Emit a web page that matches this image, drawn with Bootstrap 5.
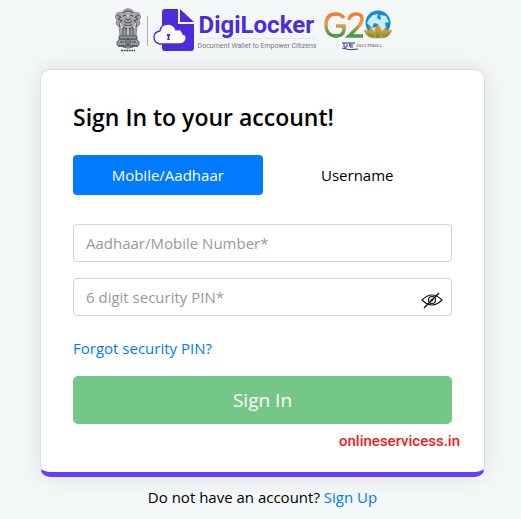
<!DOCTYPE html>
<html lang="en">
<head>
<meta charset="utf-8">
<meta name="viewport" content="width=device-width, initial-scale=1">
<title>DigiLocker - Sign In</title>
<link href="https://cdn.jsdelivr.net/npm/bootstrap@5.3.0/dist/css/bootstrap.min.css" rel="stylesheet">
<style>
body { background: #f4f7f8; color: #000; font-family: "Segoe UI", "Open Sans", "Noto Sans", sans-serif; font-size: 15px; line-height: 24px; }
.page { max-width: 540px; padding: 0 36px 0 40px; }
.brand-bar { height: 69px; padding: 8px 16px 16px 0; }
.brand-rule { width: 1px; height: 30px; background: #a9acb3; margin: 0 5px 0 6px; }
.brand-text { padding: 4px 0 0 2px; }
.brand-name { font: bold 24px/26px "Roboto", sans-serif; color: #4c2bdb; padding-left: 1px; }
.brand-tag { font: 7px/10px "Roboto", sans-serif; color: #77777e; border-top: 1px solid #e3e3f6; padding-top: 2px; }
.g20 { margin-left: 8px; }
.login-card { border: 1px solid #dcdfe2; border-bottom: 5px solid #673dff; border-radius: 10px; padding: 32px 32px 21px; box-shadow: 0 0 22px rgba(0, 0, 0, .09); }
.login-title { font-size: 23px; line-height: 30px; font-weight: 600; margin-bottom: 23px; }
.tab-btn { height: 40px; border: 0; border-radius: 4px; padding: 0; font-size: 15px; color: #000; }
.tab-btn.active, .tab-btn.active:hover { background: #007bff; color: #fff; }
.field, .field:focus { height: 38px; border: 1px solid #ced4da; border-radius: 4px; font-size: 15px; padding: 6px 12px; color: #495057; }
.field::placeholder { color: #999; }
.fields { margin-top: 29px; gap: 16px; }
.eye-btn { right: 9px; top: 12px; line-height: 0; color: #111; }
.page a { color: #007bff; text-decoration: none; }
.forgot { margin: 20px 0 16px; }
.submit-btn, .submit-btn:hover { height: 48px; border: 0; border-radius: 5px; background: #75c787; color: #fff; font-size: 19px; }
.site-mark { font: 500 15px/20px Roboto, sans-serif; color: #ed1c24; margin: 7px -8px 0 0; }
.signup { margin-top: 8px; }
</style>
<script src="https://cdn.jsdelivr.net/npm/bootstrap@5.3.0/dist/js/bootstrap.bundle.min.js"></script>
</head>
<body>
<main class="page mx-auto">
  <header class="brand-bar d-flex justify-content-center align-items-start">
    <svg width="26" height="44" viewBox="0 0 26 44" fill="none" stroke="#4a4a4c" aria-label="State Emblem of India" role="img">
      <path d="M9 2q4-3 8 0l2 2 5 1 2 4-2 3 1 4-3 3-1 9H5L4 19l-3-3 1-4-2-3 2-4 5-1z" fill="#a3a5a8" stroke="#777" stroke-width=".7"/>
      <path d="M8 5q5-4 10 0M8 8l3-1m4 0 3 1M10 11q3 2 6 0M2 7l4 2-3 2 4 2m17-6-4 2 3 2-4 2M7 12q-4 3-2 7m14-7q4 3 2 7M9 13q4 4 8 0M9 16q4 4 8 0M8 19q5 4 10 0M8 20v7m3-7v7m4-7v7m3-7v7"/>
      <path d="M5 15l2 5m14-5-2 5M13 6v3M13 18v9" stroke="#eee" stroke-width=".9"/>
      <path d="M4 28h18v3H4zM5 31h16q5 3 2 7H3q-3-4 2-7z" fill="#97999c" stroke-width=".8"/>
      <circle cx="13" cy="34" r="2.5" fill="#ddd"/><path d="M5 34h4m8 0h4M13 31v6m-2-3h4M6 38q7 4 14 0M3 38h20"/>
      <path d="M6 42.500h14" stroke-width="1.500" stroke-dasharray="2 .6"/>
    </svg>
    <span class="brand-rule mt-2"></span>
    <svg width="43" height="44" viewBox="0 0 43 44" aria-hidden="true">
      <path d="M12 1h13v15h16v24q0 3-3 3H12q-3 0-3-3V4q0-3 3-3z" fill="#4c2bdb"/>
      <path d="M27 1l14 13H27z" fill="#4c2bdb"/>
      <path d="M7 36q-6-1-6-7 0-5 6-6 1-7 8-7 6 0 8 6 5-2 7 4 4 1 3 5-1 5-6 5z" fill="#fff" stroke="#4c2bdb" stroke-width="1.300"/>
      <path d="M14 26h3v2l-1 1 1 3h-3l1-3-1-1z" fill="#4c2bdb"/>
    </svg>
    <div class="brand-text text-nowrap">
      <div class="brand-name">DigiLocker</div>
      <div class="brand-tag">Document Wallet to Empower Citizens</div>
    </div>
    <svg class="g20" width="70" height="44" viewBox="0 0 70 44" role="img" aria-label="G20 India">
      <defs>
        <linearGradient id="tri" gradientUnits="userSpaceOnUse" x1="0" y1="4" x2="0" y2="29"><stop offset=".1" stop-color="#f47b35"/><stop offset=".5" stop-color="#dba24d"/><stop offset=".9" stop-color="#4a9b45"/></linearGradient>
        <linearGradient id="petal" x1="0" y1="0" x2="0" y2="1"><stop stop-color="#f58b2c"/><stop offset=".5" stop-color="#c69b35"/><stop offset="1" stop-color="#3e9140"/></linearGradient>
      </defs>
      <path d="M20 10Q17 6 12 6C5 6 2 10 2 17s4 11 10 11q7 0 8-6v-4h-8" fill="none" stroke="url(#tri)" stroke-width="3.500"/>
      <path d="M25 12q1-6 7-6 6 0 6 5 0 4-4 8l-9 9h14" fill="none" stroke="url(#tri)" stroke-width="3.500"/>
      <circle cx="54" cy="15" r="12.500" fill="#168bd0"/>
      <path d="M45 11l4-4 5-1-1 4 3 2-2 4-4-1-2 5-3-3-2-2zM56 7l6 1 3 6-4 1 1 5-4 4-3-6-2-4 4-3zM47 20l5-1 2 5-4 3z" fill="#c9edfa"/>
      <path d="M54 17q6 6 3 13h-6q-3-7 3-13zM46 19q5 4 6 11-8-2-6-11zm16 0q-5 4-6 11 8-2 6-11zM40 22q9 0 12 8-9 1-12-8zm28 0q-9 0-12 8 9 1 12-8z" fill="url(#petal)" stroke="#e1a33a" stroke-width=".5"/>
      <path d="M18 35h13M20 35v4h3v-3m3-1v4h3m-4-2h4m-11 3q8 3 16 1" fill="none" stroke="#353684"/>
      <text x="32" y="39" font-family="Liberation Serif, serif" font-size="5" fill="#353684">2023 INDIA</text>
    </svg>
  </header>

  <form class="login-card bg-white">
    <h1 class="login-title">Sign In to your account!</h1>
    <div class="d-flex">
      <button type="button" class="btn tab-btn active w-50">Mobile/Aadhaar</button>
      <button type="button" class="btn tab-btn w-50">Username</button>
    </div>
    <div class="fields d-flex flex-column">
      <input class="form-control field" type="text" aria-label="Aadhaar/Mobile Number" placeholder="Aadhaar/Mobile Number*">
      <div class="position-relative">
        <input class="form-control field" type="password" aria-label="6 digit security PIN" placeholder="6 digit security PIN*">
        <button type="button" class="eye-btn btn p-0 border-0 position-absolute" aria-label="Show PIN">
          <svg width="22" height="20" viewBox="0 0 22 20" fill="none" stroke="currentColor" stroke-width="1.100"><path d="M1 10Q6 5 11 5t10 5q-5 5-10 5T1 10z"/><circle cx="11" cy="10" r="3.500"/><circle cx="11" cy="10" r=".8"/><path d="M3 18 18 3" stroke-width="1.400"/></svg>
        </button>
      </div>
    </div>
    <div class="forgot"><a href="#">Forgot security PIN?</a></div>
    <button type="submit" class="btn submit-btn w-100">Sign In</button>
    <div class="site-mark text-end">onlineservicess.in</div>
  </form>
  <p class="signup text-center mb-0">Do not have an account? <a href="#">Sign Up</a></p>
</main>
</body>
</html>
